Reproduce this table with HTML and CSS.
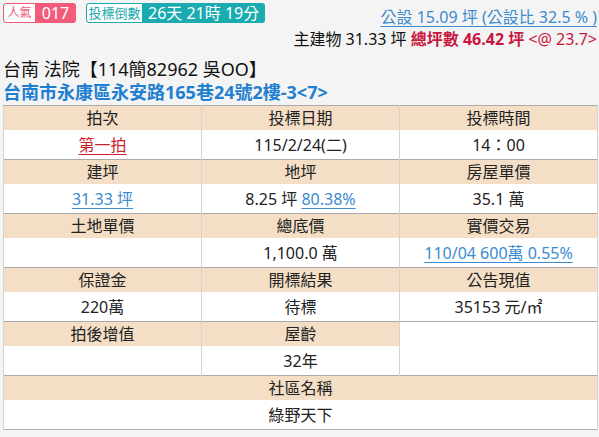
FILE: index.html
```html
<!DOCTYPE html>
<html lang="zh-Hant">
<head>
<meta charset="utf-8">
<link rel="stylesheet" href="styles.css">
</head>
<body>
<div class="page">
  <div class="top-row">
    <div class="badges">
      <span class="badge badge-pink"><span class="badge-label">人氣</span><span class="badge-value">017</span></span>
      <span class="badge badge-teal"><span class="badge-label">投標倒數</span><span class="badge-value">26天 21時 19分</span></span>
    </div>
    <a class="link public" href="#">公設 15.09 坪 (公設比 32.5 % )</a>
  </div>
  <div class="area-row">主建物 31.33 坪 <b class="total">總坪數 46.42 坪</b> <span class="unit-price">&lt;@ 23.7&gt;</span></div>
  <div class="title">台南 法院【114簡82962 吳OO】</div>
  <div class="address">台南市永康區永安路165巷24號2樓-3&lt;7&gt;</div>
  <table class="info">
    <tbody>
      <tr class="head first"><td>拍次</td><td>投標日期</td><td>投標時間</td></tr>
      <tr class="data"><td><a class="link red" href="#">第一拍</a></td><td>115/2/24(二)</td><td>14：00</td></tr>
      <tr class="head"><td>建坪</td><td>地坪</td><td>房屋單價</td></tr>
      <tr class="data"><td><a class="link" href="#">31.33 坪</a></td><td>8.25 坪 <a class="link" href="#">80.38%</a></td><td>35.1 萬</td></tr>
      <tr class="head"><td>土地單價</td><td>總底價</td><td>實價交易</td></tr>
      <tr class="data"><td></td><td>1,100.0 萬</td><td><a class="link" href="#">110/04 600萬 0.55%</a></td></tr>
      <tr class="head"><td>保證金</td><td>開標結果</td><td>公告現值</td></tr>
      <tr class="data"><td>220萬</td><td>待標</td><td>35153 元/㎡</td></tr>
      <tr class="head"><td>拍後增值</td><td>屋齡</td><td class="blank" rowspan="2"></td></tr>
      <tr class="data"><td></td><td>32年</td></tr>
      <tr class="head"><td colspan="3">社區名稱</td></tr>
      <tr class="data"><td colspan="3">綠野天下</td></tr>
    </tbody>
  </table>
</div>
</body>
</html>
```

FILE: styles.css
```css
html, body {
  margin: 0;
  padding: 0;
  background: #f4f4f4;
}
body {
  font-family: "Noto Sans", "Noto Sans CJK TC", sans-serif;
  color: #222;
}
.page {
  padding: 3px 2px 0 3px;
}
.top-row {
  display: flex;
  justify-content: space-between;
  align-items: flex-start;
  height: 25px;
}
.badges {
  display: flex;
  gap: 10px;
  flex-shrink: 0;
}
.badge {
  display: flex;
  height: 20px;
  border-radius: 3px;
  overflow: hidden;
  box-sizing: border-box;
  white-space: nowrap;
  flex-shrink: 0;
}
.badge-label {
  background: #fff;
  font-size: 12px;
  line-height: 18px;
  border: 1px solid;
  border-right: none;
  border-radius: 3px 0 0 3px;
  text-align: center;
  box-sizing: border-box;
}
.badge-value {
  color: #fff;
  font-size: 16px;
  line-height: 20px;
  text-align: center;
}
.badge-pink .badge-label { color: #ef5a77; border-color: #ef5a77; width: 32px; }
.badge-pink .badge-value { background: #f25b79; width: 41px; }
.badge-teal .badge-label { color: #1aa9ae; border-color: #1aa9ae; width: 56px; font-size: 13px; }
.badge-teal .badge-value { background: #1aabb0; font-size: 16px; padding: 0 6px; }
.link {
  color: #3b8bd0;
  text-decoration: underline;
  text-underline-offset: 3px;
  text-decoration-thickness: 1px;
}
.public {
  font-size: 16px;
  line-height: 22px;
  margin-top: 3px;
  white-space: nowrap;
}
.area-row {
  text-align: right;
  font-size: 16px;
  line-height: 22px;
  color: #111;
}
.total {
  color: #c8173e;
  font-weight: bold;
}
.unit-price {
  color: #c8173e;
}
.title {
  font-size: 18px;
  line-height: 24px;
  margin-top: 7px;
  color: #111;
}
.address {
  font-size: 18px;
  line-height: 23px;
  font-weight: bold;
  color: #1f7fd1;
}
.info {
  width: 595px;
  margin-top: 1px;
  border-collapse: collapse;
  table-layout: fixed;
  border: 1px solid #adadad;
  font-size: 16px;
  color: #222;
}
.info td {
  text-align: center;
  padding: 0;
  border-left: 1px solid #d8d2c8;
  border-right: 1px solid #d8d2c8;
}
.info .head td {
  background: #f4dfc6;
  height: 24px;
  border-top: 1px solid #aaaaaa;
  line-height: 22px;
}
.info .data td {
  background: #fff;
  height: 29px;
  line-height: 22px;
}
.info td.blank {
  background: #fff;
}
.link.red {
  color: #cc1f2e;
}
```
